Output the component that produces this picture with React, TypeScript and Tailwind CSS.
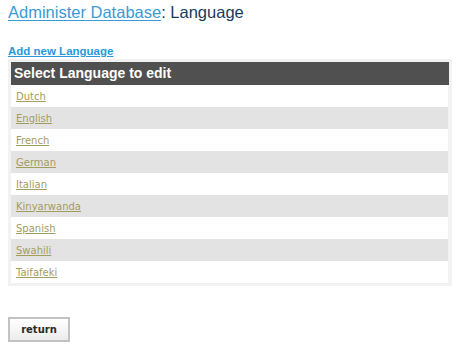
const languages = [
  "Dutch",
  "English",
  "French",
  "German",
  "Italian",
  "Kinyarwanda",
  "Spanish",
  "Swahili",
  "Taifafeki",
];

export default function App() {
  return (
    <div className="min-h-[347px] bg-white px-[8px] font-['Liberation_Sans',Arial,sans-serif]">
      <h1 className="pt-[2px] text-[16.5px] leading-[21px] font-normal text-[#183a5f]">
        <a href="#" className="text-[#3a9ad6] underline decoration-1 underline-offset-2">
          Administer Database
        </a>
        : Language
      </h1>
      <div className="mt-[20px] h-[15px] text-[11.5px] leading-[16px] font-bold">
        <a href="#" className="text-[#2a98d8] underline underline-offset-1">
          Add new Language
        </a>
      </div>
      <div className="mt-[1px] w-[444px] bg-[#f2f2f2] p-[3px]">
        <div className="flex h-[23px] items-center bg-[#505050] px-[3px] text-[14px] font-bold text-white">
          Select Language to edit
        </div>
        {languages.map((lang, i) => (
          <div
            key={lang}
            className={
              i % 2 === 1
                ? "mr-[1px] flex h-[22px] items-center bg-[#e3e3e3] px-[5px]"
                : "mr-[1px] flex h-[22px] items-center bg-white px-[5px]"
            }
          >
            <a
              href="#"
              className="font-['DejaVu_Sans',Verdana,sans-serif] text-[10px] text-[#a39c5e] underline underline-offset-1"
            >
              {lang}
            </a>
          </div>
        ))}
      </div>
      <button
        type="button"
        className="mt-[31px] h-[25px] w-[62px] border-2 border-[#c2c2c2] bg-gradient-to-b from-white to-[#ececec] font-['DejaVu_Sans',Verdana,sans-serif] text-[10px] font-bold text-[#2a2a2a]"
      >
        return
      </button>
    </div>
  );
}
